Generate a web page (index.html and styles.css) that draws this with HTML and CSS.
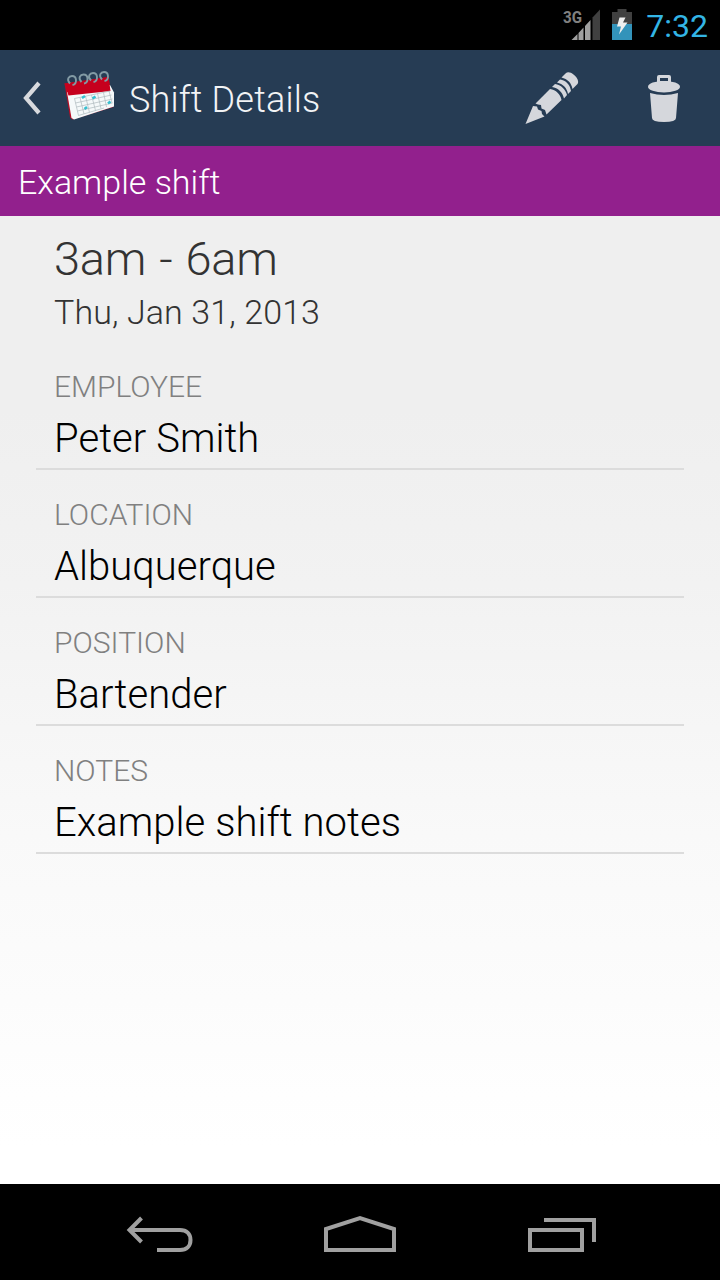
FILE: index.html
```
<!DOCTYPE html>
<html lang="en">
<head>
<meta charset="utf-8">
<title>Shift Details</title>
<link rel="stylesheet" href="styles.css">
</head>
<body>
<div class="screen">
  <div class="status-bar">
    <svg class="signal" width="38" height="34" viewBox="0 0 38 34">
      <text class="network" x="0" y="15" textLength="19" lengthAdjust="spacingAndGlyphs">3G</text>
      <path fill="#a0a0a0" d="M8.500 32l6-6v6zM15.500 25l5-5.500V32h-5zM22 18l5.500-6v20H22z"/>
      <path fill="#404040" d="M29.500 9.500l7.500-8V32h-7.500z"/>
    </svg>
    <svg class="battery" width="20" height="32" viewBox="0 0 20 32">
      <path fill="#404040" d="M5.500 1h9v3H20v12H0V4h5.500z"/>
      <path fill="#3393ba" d="M0 16h20v16H0z"/>
      <path fill="#eee" d="M7.500 9.500h6l-2.500 5h4.500L7 26.500l2-8H5z"/>
    </svg>
    <span class="clock">7:32</span>
  </div>

  <header class="action-bar">
    <svg class="up" width="19" height="34" viewBox="0 0 19 34"><path d="M17 2L4 17l13 15" fill="none" stroke="#d8dade" stroke-width="4.200"/></svg>
    <svg class="app-icon" width="52" height="52" viewBox="0 0 52 52">
      <path d="M.5 12.500L44.500 6l5 30-41 12.500-2.500-2z" fill="#b80d25"/>
      <path d="M3 21L46 14l4 7.500V35.500L10 48.500 7.500 47z" fill="#f5f9fa"/>
      <path d="M.5 12.500L44.500 6l2 14L4.500 24.500z" fill="#c6001d"/>
      <path d="M10.500 27.500L46 20M11.500 32l36-8M12.500 36l36-8M13.500 40l35-8M14.500 44.500L40 37M10.500 27.500l4 17M16 26.500l4 16.500M21.500 25l4 16.500M27.500 24l4 15.500M33.500 22.500l3.500 15M39.500 21.500l3 14.500M45 20l3 12" fill="none" stroke="#adb9bd" stroke-width=".7"/>
      <path d="M18 27l3-2M28.500 27.500l3-2M20.500 38l2.500-2M44 32.500l2.500-2" stroke="#35bfd0" stroke-width="2.600"/>
      <g fill="none" stroke="#829aa4" stroke-width="1.900"><path d="M6 12.500C2 8 5 5 8 5c5 0 5.500 8 .5 9M17.500 11c-4-4.500-1-7.500 2-7.500 5 0 5.500 8 .5 9M27 9.500c-4-4.500-1-7.500 2-7.500 5 0 5.500 8 .5 9M38 8.500C34 4 37 1 40 1c5 0 5.500 8 .5 9"/></g>
    </svg>
    <h1 class="title">Shift Details</h1>
    <svg class="edit" width="54" height="54" viewBox="0 0 54 54" fill="#d5d7dc">
      <path d="M.5 53L8 35l4 .5 1 3 3.500 1.500.5 3 2.500 2.500z"/>
      <path d="M10.500 32.500L25 18c6 1 10.500 5 11.500 11L21.500 43.500 20 39l-3.500-1.500-.5-3.500-3-.5z"/>
      <path d="M27 16l3-3c6 1 10.500 5 12 11l-3 3.500C37.500 21 33 17 27 16zM32 11.500l3-3c6 1 10 5 11 11.500L43 23c-1-6-5-10-11-11.500zM36.500 6.500l4-4c2-2 5-1.500 8 1s6 6 4 9.500l-5 5c-1-6-5-10-11-11.500z"/>
    </svg>
    <svg class="trash" width="34" height="50" viewBox="0 0 34 50" fill="#d5d7dc">
      <path fill-rule="evenodd" d="M10 10V4q0-2 2-2h10q2 0 2 2v6zM13 5v3h8V5z"/>
      <ellipse cx="17" cy="13.700" rx="16" ry="5.800"/>
      <path d="M3 20q14 4 28 0l-2 25q0 4-12 4T5 45z"/>
    </svg>
  </header>

  <div class="shift-name">Example shift</div>

  <main class="details">
    <div class="summary">
      <div class="time">3am - 6am</div>
      <div class="date">Thu, Jan 31, 2013</div>
    </div>
    <section class="field"><div class="label">EMPLOYEE</div><div class="value">Peter Smith</div></section>
    <section class="field"><div class="label">LOCATION</div><div class="value">Albuquerque</div></section>
    <section class="field"><div class="label">POSITION</div><div class="value">Bartender</div></section>
    <section class="field"><div class="label">NOTES</div><div class="value">Example shift notes</div></section>
  </main>

  <nav class="nav-bar">
    <svg width="68" height="40" viewBox="0 0 68 40" fill="none" stroke="#a0a0a0" stroke-width="4"><path d="M15.500 4L3.500 16l12 12M3 16h51c6.500 0 10.500 4 10.500 10S60.500 36 54 36H31"/></svg>
    <svg width="72" height="40" viewBox="0 0 72 40" fill="none" stroke="#a0a0a0" stroke-width="4"><path d="M2 36V15L36 4l34 11v21z"/></svg>
    <svg width="68" height="40" viewBox="0 0 68 40" fill="none" stroke="#a0a0a0" stroke-width="4"><path d="M2 16h52v20H2zM16 6h50v22"/></svg>
  </nav>
</div>
</body>
</html>
```
FILE: styles.css
```
* { box-sizing: border-box; }
body {
  margin: 0;
  font-family: Roboto, "Liberation Sans", sans-serif;
  font-weight: 300;
}
svg { display: block; flex: none; }
.screen {
  width: 720px;
  height: 1280px;
  display: flex;
  flex-direction: column;
}
.status-bar {
  height: 50px;
  background: #000;
  display: flex;
  justify-content: flex-end;
  align-items: center;
  padding-right: 12px;
}
.signal { margin: 0 11px 0 0; }
.network { font: 700 17px Roboto, sans-serif; fill: #808080; }
.battery { margin: 0 14px 2px 0; }
.clock {
  font-size: 32px;
  font-weight: 400;
  line-height: 50px;
  padding-top: 1px;
  color: #33b5e5;
}
.action-bar {
  height: 96px;
  background: #263c54;
  display: flex;
  align-items: center;
  padding: 0 39px 0 22px;
}
.app-icon { margin-left: 23px; margin-bottom: 3px; }
.title {
  flex: 1;
  margin: 0 0 0 13px;
  padding-top: 4px;
  font-size: 36px;
  font-weight: 300;
  line-height: 92px;
  letter-spacing: .18px;
  color: #f2f3f5;
}
.trash { margin-left: 68px; }
.shift-name {
  height: 70px;
  padding-left: 18px;
  background: #92208d;
  color: #fff;
  font-size: 34px;
  line-height: 73px;
}
.details {
  flex: 1;
  padding: 15px 36px 0;
  background: linear-gradient(#efefef 0, #efefef 20%, #f2f2f2 38%, #f9f9f9 64%, #fcfcfc 81%, #fff 96%);
}
.summary {
  height: 111px;
  padding-left: 18px;
  color: #333;
}
.time { font-size: 47px; line-height: 56px; letter-spacing: -.3px; word-spacing: 2px; }
.date { font-size: 34px; line-height: 51px; letter-spacing: .1px; }
.field {
  height: 128px;
  padding: 24px 18px 0;
  border-bottom: 2px solid #dcdcdc;
}
.label { font-size: 30px; line-height: 42px; color: #808080; }
.value { font-size: 40px; line-height: 62px; letter-spacing: .05px; color: #000; }
.nav-bar {
  height: 96px;
  background: #000;
  display: flex;
  align-items: center;
  justify-content: space-between;
  padding: 4px 124px 0 126px;
}
.nav-bar svg:nth-child(2) { margin-right: 2px; }
```
